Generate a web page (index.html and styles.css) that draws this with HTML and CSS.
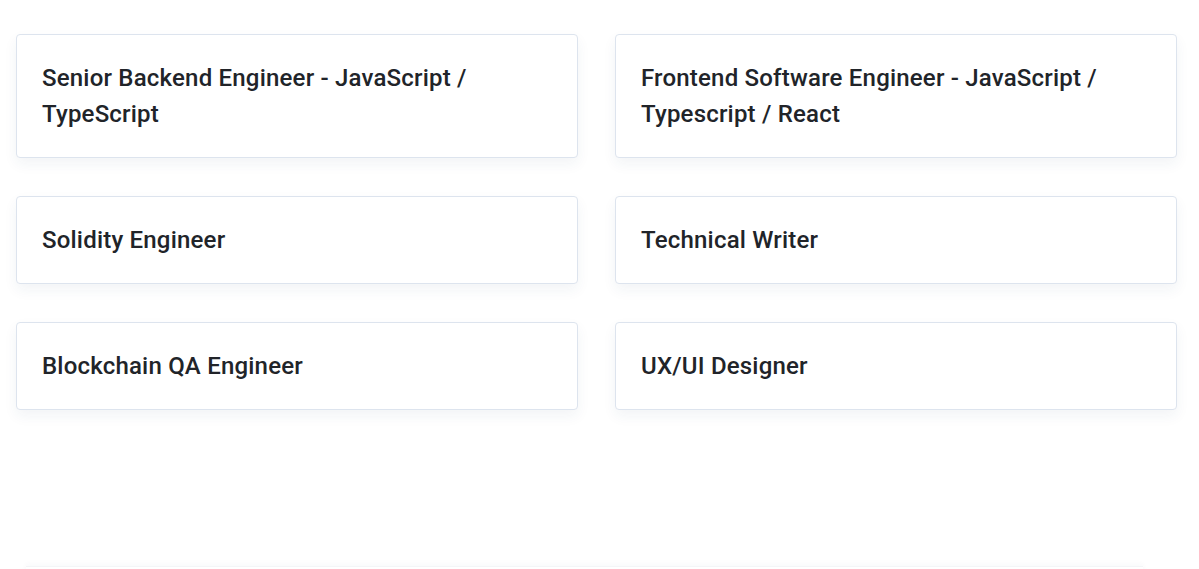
FILE: index.html
```html
<!DOCTYPE html>
<html lang="en">
<head>
<meta charset="utf-8">
<title>Jobs</title>
<link rel="stylesheet" href="styles.css">
</head>
<body>
<div class="page">
  <div class="jobs">
    <a class="job" href="#"><h3 class="job-title">Senior Backend Engineer - JavaScript / TypeScript</h3></a>
    <a class="job" href="#"><h3 class="job-title">Frontend Software Engineer - JavaScript / Typescript / React</h3></a>
    <a class="job" href="#"><h3 class="job-title">Solidity Engineer</h3></a>
    <a class="job" href="#"><h3 class="job-title">Technical Writer</h3></a>
    <a class="job" href="#"><h3 class="job-title">Blockchain QA Engineer</h3></a>
    <a class="job" href="#"><h3 class="job-title">UX/UI Designer</h3></a>
  </div>
  <div class="next-section"></div>
</div>
</body>
</html>
```
FILE: styles.css
```css
html, body {
  margin: 0;
  padding: 0;
  background: #ffffff;
  font-family: Roboto, "Liberation Sans", sans-serif;
  overflow: hidden;
}

.page {
  padding: 34px 22px 0 16px;
  height: 569px;
  box-sizing: border-box;
}

.jobs {
  display: grid;
  grid-template-columns: 562px 562px;
  column-gap: 37px;
  row-gap: 38px;
}

.job {
  display: block;
  text-decoration: none;
  background: #ffffff;
  border: 1px solid #dde4ee;
  border-radius: 4px;
  padding: 25px 25px 25px;
  box-shadow: 0 6px 14px rgba(40, 60, 100, 0.06);
}

.job-title {
  margin: 0;
  font-size: 24px;
  line-height: 36px;
  font-weight: 500;
  color: #212429;
  letter-spacing: 0.2px;
}

.next-section {
  margin: 156px 34px 0 10px;
  height: 20px;
  border-top: 1px solid #f4f5f7;
  box-shadow: 0 -2px 6px rgba(40, 60, 100, 0.03);
}
```
